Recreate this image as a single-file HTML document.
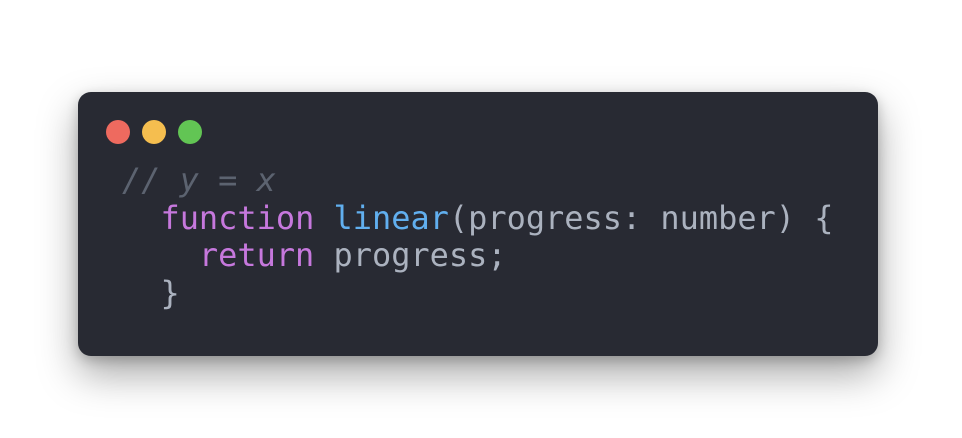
<!DOCTYPE html>
<html><head><meta charset="utf-8"><style>
html,body{margin:0;padding:0;background:#fff;width:962px;height:438px;overflow:hidden}
.card{position:absolute;left:78px;top:92px;width:800px;height:264px;background:#282a33;border-radius:13px;box-shadow:0 18px 40px rgba(0,0,0,0.35),0 4px 12px rgba(0,0,0,0.2)}
.dot{position:absolute;top:28px;width:24px;height:24px;border-radius:50%}
pre{position:absolute;left:44px;top:70px;margin:0;font-family:"DejaVu Sans Mono","Liberation Mono",monospace;font-size:31.95px;line-height:37.5px;color:#abb2bf}
.c{color:#5c6370;font-style:italic}.k{color:#c678dd}.f{color:#61afef}
</style></head><body>
<div class="card">
<div class="dot" style="left:28px;background:#ee6a5f"></div>
<div class="dot" style="left:64px;background:#f5be4f"></div>
<div class="dot" style="left:100px;background:#62c554"></div>
<pre><span class="c">// y = x</span>
  <span class="k">function</span> <span class="f">linear</span>(progress: number) {
    <span class="k">return</span> progress;
  }</pre>
</div>
</body></html>
